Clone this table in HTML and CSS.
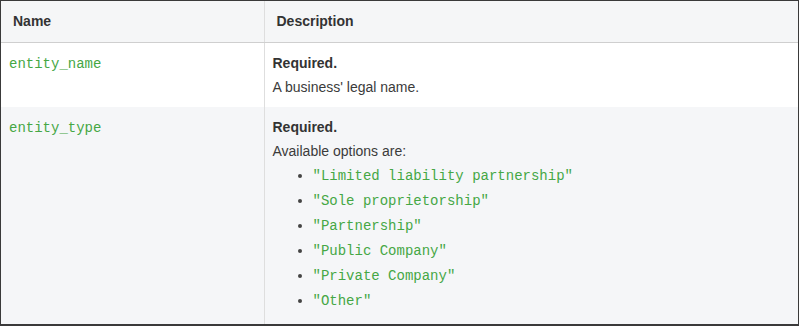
FILE: index.html
```html
<!DOCTYPE html>
<html>
<head>
<meta charset="utf-8">
<link rel="stylesheet" href="styles.css">
</head>
<body>
<div class="frame">
  <table class="params">
    <colgroup><col class="col-name"><col class="col-desc"></colgroup>
    <thead>
      <tr><th>Name</th><th>Description</th></tr>
    </thead>
    <tbody>
      <tr class="row-1">
        <td><code class="field">entity_name</code></td>
        <td>
          <div class="req">Required.</div>
          <div>A business' legal name.</div>
        </td>
      </tr>
      <tr class="row-2">
        <td><code class="field">entity_type</code></td>
        <td>
          <div class="req">Required.</div>
          <div>Available options are:</div>
          <ul class="opts">
            <li><code>"Limited liability partnership"</code></li>
            <li><code>"Sole proprietorship"</code></li>
            <li><code>"Partnership"</code></li>
            <li><code>"Public Company"</code></li>
            <li><code>"Private Company"</code></li>
            <li><code>"Other"</code></li>
          </ul>
        </td>
      </tr>
    </tbody>
  </table>
</div>
</body>
</html>
```

FILE: styles.css
```css
html, body {
  margin: 0;
  padding: 0;
  background: #ffffff;
}

.frame {
  width: 799px;
  height: 326px;
  box-sizing: border-box;
  border: 1px solid #3a3a3a;
  border-bottom-width: 2px;
  overflow: hidden;
  background: #f5f6f8;
}

.params {
  width: 100%;
  border-collapse: collapse;
  table-layout: fixed;
  font-family: "Liberation Sans", Arial, sans-serif;
  font-size: 14px;
  line-height: 24px;
  color: #3b3b3b;
}

.col-name { width: 263px; }

.params th {
  height: 41px;
  padding: 0 12px;
  text-align: left;
  font-weight: bold;
  color: #333333;
  background: #f5f6f7;
  border-bottom: 1px solid #cfcfcf;
  box-sizing: border-box;
}

.params td {
  vertical-align: top;
  padding: 8px 8px;
}

.params th + th,
.params td + td {
  border-left: 1px solid #dedede;
}

.row-1 td {
  height: 64px;
  box-sizing: border-box;
  background: #ffffff;
}

.row-2 td {
  height: 218px;
  box-sizing: border-box;
  background: #f5f6f8;
}

.req {
  font-weight: bold;
  color: #333333;
}

code {
  font-family: "Liberation Mono", "Courier New", monospace;
  font-size: 14px;
  color: #45a745;
}

.opts {
  margin: 1px 0 0;
  padding-left: 40px;
  list-style: disc;
  color: #444444;
}

.opts li {
  font-family: "Liberation Mono", "Courier New", monospace;
  font-size: 14px;
  line-height: 25px;
}
```
